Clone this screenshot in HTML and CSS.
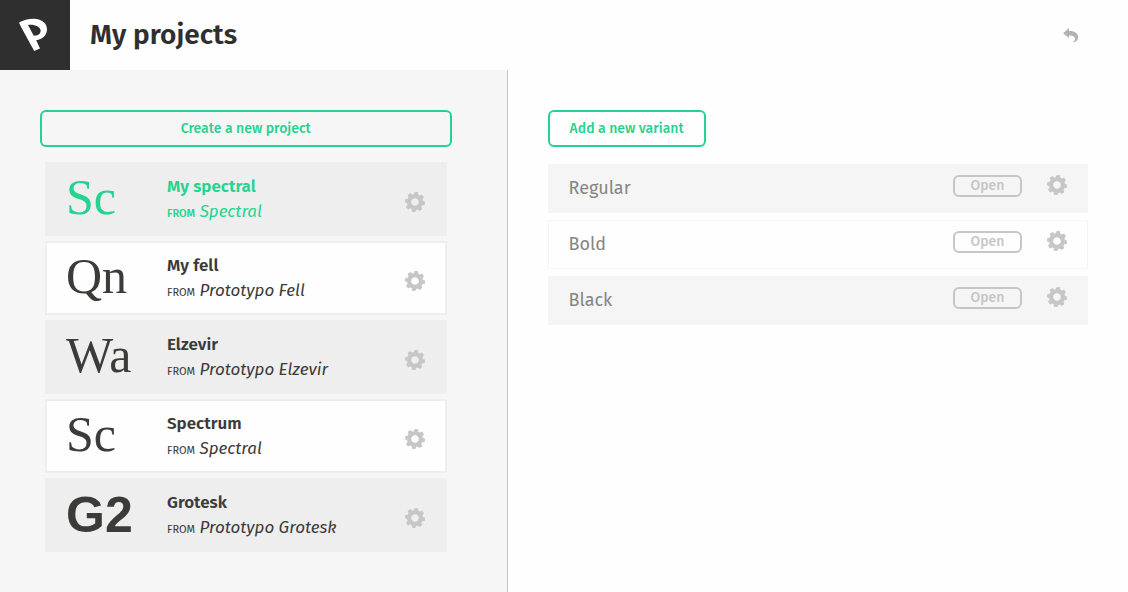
FILE: index.html
```html
<!DOCTYPE html>
<html lang="en">
<head>
<meta charset="utf-8">
<meta name="viewport" content="width=device-width, initial-scale=1">
<title>My projects</title>
<link rel="stylesheet" href="styles.css">
</head>
<body>
<svg class="sprite" aria-hidden="true">
  <symbol id="gear" viewBox="-10 -10 20 20">
    <g transform="rotate(8)">
      <circle r="5.9" fill="none" stroke="currentColor" stroke-width="4.2"/>
      <g fill="currentColor">
        <path id="teeth" d="M-2.2-7.4-1.7-10H1.7L2.2-7.4ZM-2.2 7.4-1.7 10H1.7L2.2 7.4ZM-7.4-2.2-10-1.7V1.7L-7.4 2.2ZM7.4-2.2 10-1.7V1.7L7.4 2.2Z"/>
        <use href="#teeth" transform="rotate(45)"/>
      </g>
    </g>
  </symbol>
</svg>
<div class="app">
  <header class="header">
    <a class="logo" href="#" aria-label="Home">
      <svg viewBox="0 0 70 70" width="70" height="70" aria-hidden="true">
        <path fill="#fff" fill-rule="evenodd" d="M19 22.500C23 20 29 18.600 34 18.700C42 19 47.200 23.500 47 29.500C46.800 35.500 42.500 39.500 36.200 40.300L40 48.400L34.200 50.900L20.800 26.500ZM28 24.900L33.600 35.600C38.500 35.900 41 33.500 40.600 30.300C40 26.500 34.500 24 28 24.900Z"/>
      </svg>
    </a>
    <h1 class="title">My projects</h1>
    <button class="icon-button back" aria-label="Back">
      <svg viewBox="0 0 16 16" width="16" height="16" aria-hidden="true"><path fill="currentColor" d="M0 6.200L6 1V4C11.500 3.800 15.200 6.200 15.200 10C15.200 13 13 15 10 15.300L9.600 14.900C11.500 14 12.100 13 11.900 11.500C11.700 9.200 9.500 8.300 6 8.500V11Z"/></svg>
    </button>
  </header>
  <main class="panels">
    <section class="projects">
      <button class="action action-wide">Create a new project</button>
      <ul class="project-list">
        <li class="project selected"><span class="preview">Sc</span><div class="info"><h2 class="name">My spectral</h2><p class="from"><small>FROM</small> <em>Spectral</em></p></div><button class="icon-button" aria-label="My spectral settings"><svg class="gear"><use href="#gear"/></svg></button></li>
        <li class="project"><span class="preview">Qn</span><div class="info"><h2 class="name">My fell</h2><p class="from"><small>FROM</small> <em>Prototypo Fell</em></p></div><button class="icon-button" aria-label="My fell settings"><svg class="gear"><use href="#gear"/></svg></button></li>
        <li class="project"><span class="preview">Wa</span><div class="info"><h2 class="name">Elzevir</h2><p class="from"><small>FROM</small> <em>Prototypo Elzevir</em></p></div><button class="icon-button" aria-label="Elzevir settings"><svg class="gear"><use href="#gear"/></svg></button></li>
        <li class="project"><span class="preview">Sc</span><div class="info"><h2 class="name">Spectrum</h2><p class="from"><small>FROM</small> <em>Spectral</em></p></div><button class="icon-button" aria-label="Spectrum settings"><svg class="gear"><use href="#gear"/></svg></button></li>
        <li class="project"><span class="preview preview-sans">G2</span><div class="info"><h2 class="name">Grotesk</h2><p class="from"><small>FROM</small> <em>Prototypo Grotesk</em></p></div><button class="icon-button" aria-label="Grotesk settings"><svg class="gear"><use href="#gear"/></svg></button></li>
      </ul>
    </section>
    <section class="variants">
      <button class="action">Add a new variant</button>
      <ul class="variant-list">
        <li class="variant"><span class="variant-name">Regular</span><button class="open">Open</button><button class="icon-button" aria-label="Regular settings"><svg class="gear"><use href="#gear"/></svg></button></li>
        <li class="variant"><span class="variant-name">Bold</span><button class="open">Open</button><button class="icon-button" aria-label="Bold settings"><svg class="gear"><use href="#gear"/></svg></button></li>
        <li class="variant"><span class="variant-name">Black</span><button class="open">Open</button><button class="icon-button" aria-label="Black settings"><svg class="gear"><use href="#gear"/></svg></button></li>
      </ul>
    </section>
  </main>
</div>
</body>
</html>
```

FILE: styles.css
```css
* { box-sizing: border-box; }
body, h1, h2, p, ul { margin: 0; padding: 0; }
body {
  font-family: "Fira Sans", "Noto Sans", sans-serif;
  color: #3b3b39;
  background: #fefefe;
}
button { font: inherit; background: none; cursor: pointer; }
ul { list-style: none; }
.sprite { position: absolute; width: 0; height: 0; }
.app { display: flex; flex-direction: column; min-height: 100vh; }

.header { display: flex; align-items: center; padding-right: 49px; }
.logo { display: block; width: 70px; height: 70px; background: #2f2f2f; }
.title {
  flex: 1;
  margin-left: 20px;
  font-size: 28px;
  line-height: 34px;
  font-weight: 600;
  color: #2f2f2f;
}
.icon-button { display: block; flex: none; border: 0; padding: 0; color: #c6c6c6; }
.icon-button svg { display: block; }
.back { color: #b3b3b3; }
.gear { width: 20px; height: 20px; }

.panels { flex: 1; display: grid; grid-template-columns: 45% 1fr; }
.projects {
  padding: 40px 55px 40px 40px;
  background: #f6f6f6;
  border-right: 1px solid #c6c6c6;
}
.variants { padding: 40px; }

.action {
  display: block;
  height: 37px;
  padding: 0 20px;
  border: 2px solid #24d390;
  border-radius: 6px;
  color: #24d390;
  font-size: 14px;
  font-weight: 500;
}
.action-wide { width: 100%; }

.project-list { display: grid; gap: 5px; padding: 15px 5px 0; }
.project {
  display: flex;
  align-items: center;
  height: 74px;
  padding: 0 20px 0 19px;
  border: 2px solid #eee;
  background: #eee;
}
.project:nth-child(even) { background: #fefefe; }
.preview {
  width: 101px;
  padding-bottom: 4px;
  font-family: "Liberation Serif", serif;
  font-size: 50px;
  line-height: 60px;
}
.preview-sans { padding-bottom: 0; font-family: "Liberation Sans", sans-serif; font-weight: 700; }
.info { flex: 1; padding-top: 2px; }
.name { font-size: 17px; line-height: 24px; font-weight: 600; }
.from { font-size: 17px; line-height: 25px; }
.from small { font-size: 11px; }
.from em { font-weight: 400; }
.project .icon-button { margin-top: 5px; }
.selected { color: #24d390; }
.selected small { font-weight: 500; }

.variant-list { display: grid; gap: 7px; padding-top: 17px; }
.variant {
  display: flex;
  align-items: center;
  height: 49px;
  padding: 0 20px;
  border: 1px solid #f5f5f5;
  background: #f5f5f5;
}
.variant:nth-child(even) { background: #fefefe; }
.variant-name { flex: 1; padding-bottom: 2px; font-size: 18px; line-height: 24px; color: #858585; }
.variant .open { margin-bottom: 6px; }
.variant .icon-button { margin-bottom: 8px; }
.open {
  width: 69px;
  height: 22px;
  margin-right: 25px;
  padding: 0;
  border: 2px solid #c6c6c6;
  border-radius: 6px;
  color: #c6c6c6;
  font-size: 14px;
  line-height: 16px;
  font-weight: 500;
}
```
